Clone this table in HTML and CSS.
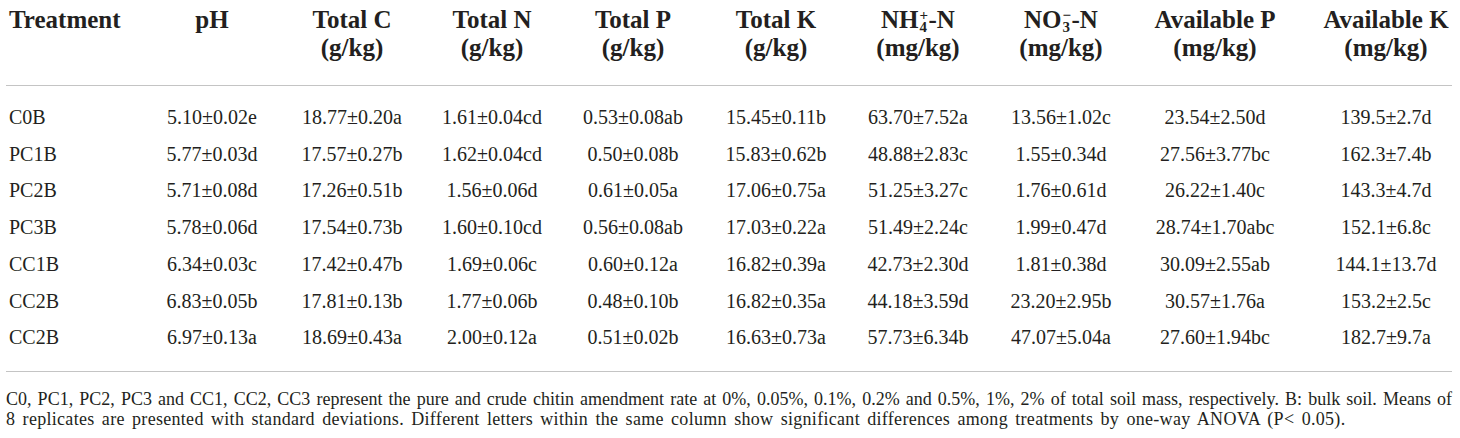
FILE: index.html
```html
<!DOCTYPE html>
<html lang="en">
<head>
    <meta charset="UTF-8">
    <title>Soil properties table</title>
    <link rel="stylesheet" href="styles.css">
</head>
<body>
    <div class="table-wrap">
        <table class="soil-table">
            <colgroup>
                <col class="col-treat">
                <col class="col-140">
                <col class="col-140">
                <col class="col-140">
                <col class="col-142">
                <col class="col-144">
                <col class="col-140">
                <col class="col-146">
                <col class="col-162">
                <col class="col-last">
            </colgroup>
            <thead>
                <tr>
                    <th class="treat">Treatment</th>
                    <th>pH</th>
                    <th>Total C<br>(g/kg)</th>
                    <th>Total N<br>(g/kg)</th>
                    <th>Total P<br>(g/kg)</th>
                    <th>Total K<br>(g/kg)</th>
                    <th>NH<span class="ion"><span class="ion-sup">+</span><span class="ion-sub">4</span></span>-N<br>(mg/kg)</th>
                    <th>NO<span class="ion"><span class="ion-sup">&minus;</span><span class="ion-sub">3</span></span>-N<br>(mg/kg)</th>
                    <th>Available P<br>(mg/kg)</th>
                    <th class="last">Available K<br>(mg/kg)</th>
                </tr>
            </thead>
            <tbody>
                <tr class="first">
                    <td class="treat">C0B</td>
                    <td>5.10&plusmn;0.02e</td><td>18.77&plusmn;0.20a</td><td>1.61&plusmn;0.04cd</td><td>0.53&plusmn;0.08ab</td>
                    <td>15.45&plusmn;0.11b</td><td>63.70&plusmn;7.52a</td><td>13.56&plusmn;1.02c</td><td>23.54&plusmn;2.50d</td><td class="last">139.5&plusmn;2.7d</td>
                </tr>
                <tr>
                    <td class="treat">PC1B</td>
                    <td>5.77&plusmn;0.03d</td><td>17.57&plusmn;0.27b</td><td>1.62&plusmn;0.04cd</td><td>0.50&plusmn;0.08b</td>
                    <td>15.83&plusmn;0.62b</td><td>48.88&plusmn;2.83c</td><td>1.55&plusmn;0.34d</td><td>27.56&plusmn;3.77bc</td><td class="last">162.3&plusmn;7.4b</td>
                </tr>
                <tr>
                    <td class="treat">PC2B</td>
                    <td>5.71&plusmn;0.08d</td><td>17.26&plusmn;0.51b</td><td>1.56&plusmn;0.06d</td><td>0.61&plusmn;0.05a</td>
                    <td>17.06&plusmn;0.75a</td><td>51.25&plusmn;3.27c</td><td>1.76&plusmn;0.61d</td><td>26.22&plusmn;1.40c</td><td class="last">143.3&plusmn;4.7d</td>
                </tr>
                <tr>
                    <td class="treat">PC3B</td>
                    <td>5.78&plusmn;0.06d</td><td>17.54&plusmn;0.73b</td><td>1.60&plusmn;0.10cd</td><td>0.56&plusmn;0.08ab</td>
                    <td>17.03&plusmn;0.22a</td><td>51.49&plusmn;2.24c</td><td>1.99&plusmn;0.47d</td><td>28.74&plusmn;1.70abc</td><td class="last">152.1&plusmn;6.8c</td>
                </tr>
                <tr>
                    <td class="treat">CC1B</td>
                    <td>6.34&plusmn;0.03c</td><td>17.42&plusmn;0.47b</td><td>1.69&plusmn;0.06c</td><td>0.60&plusmn;0.12a</td>
                    <td>16.82&plusmn;0.39a</td><td>42.73&plusmn;2.30d</td><td>1.81&plusmn;0.38d</td><td>30.09&plusmn;2.55ab</td><td class="last">144.1&plusmn;13.7d</td>
                </tr>
                <tr>
                    <td class="treat">CC2B</td>
                    <td>6.83&plusmn;0.05b</td><td>17.81&plusmn;0.13b</td><td>1.77&plusmn;0.06b</td><td>0.48&plusmn;0.10b</td>
                    <td>16.82&plusmn;0.35a</td><td>44.18&plusmn;3.59d</td><td>23.20&plusmn;2.95b</td><td>30.57&plusmn;1.76a</td><td class="last">153.2&plusmn;2.5c</td>
                </tr>
                <tr class="end">
                    <td class="treat">CC2B</td>
                    <td>6.97&plusmn;0.13a</td><td>18.69&plusmn;0.43a</td><td>2.00&plusmn;0.12a</td><td>0.51&plusmn;0.02b</td>
                    <td>16.63&plusmn;0.73a</td><td>57.73&plusmn;6.34b</td><td>47.07&plusmn;5.04a</td><td>27.60&plusmn;1.94bc</td><td class="last">182.7&plusmn;9.7a</td>
                </tr>
            </tbody>
        </table>
        <p class="table-note">
            <span class="note-line first-line">C0, PC1, PC2, PC3 and CC1, CC2, CC3 represent the pure and crude chitin amendment rate at 0%, 0.05%, 0.1%, 0.2% and 0.5%, 1%, 2% of total soil mass, respectively. B: bulk soil. Means of</span>
            <span class="note-line">8 replicates are presented with standard deviations. Different letters within the same column show significant differences among treatments by one-way ANOVA (P&lt; 0.05).</span>
        </p>
    </div>
</body>
</html>
```

FILE: styles.css
```css
* {
    box-sizing: border-box;
}
body {
    margin: 0;
    background: #fff;
    color: #231f20;
    font-family: "Liberation Serif", "Times New Roman", serif;
}
.table-wrap {
    width: 1446px;
    margin-left: 6px;
}
.soil-table {
    width: 1446px;
    table-layout: fixed;
    border-collapse: collapse;
}
.col-treat { width: 136px; }
.col-140 { width: 140px; }
.col-142 { width: 142px; }
.col-144 { width: 144px; }
.col-146 { width: 146px; }
.col-162 { width: 162px; }
.col-last { width: 156px; }

.soil-table th {
    font-size: 25px;
    font-weight: bold;
    line-height: 28px;
    text-align: center;
    vertical-align: top;
    padding: 6px 0 23px;
    border-bottom: 1.5px solid #c4c4c4;
    white-space: nowrap;
}
.soil-table td {
    font-size: 20px;
    line-height: 24px;
    height: 36.8px;
    padding: 0;
    text-align: center;
    vertical-align: middle;
    white-space: nowrap;
}
.soil-table .treat {
    text-align: left;
    padding-left: 3px;
}
.soil-table .last {
    padding-left: 24px;
}
.soil-table tr.first td {
    padding-top: 13px;
    height: 49.8px;
}
.soil-table tr.end td {
    padding-bottom: 15px;
    height: 51.8px;
    border-bottom: 1.5px solid #c4c4c4;
}
.soil-table tr.first td.last,
.soil-table tr.end td.last {
    padding-left: 24px;
}

/* stacked super/subscript on ion names */
.ion {
    position: relative;
    display: inline-block;
    width: 10px;
    height: 0;
}
.ion-sup,
.ion-sub {
    position: absolute;
    left: 1px;
    font-size: 15px;
    line-height: 1;
}
.ion-sup {
    top: -20px;
}
.ion-sub {
    top: -8px;
}

.table-note {
    margin: 17px 0 0;
    font-size: 18px;
    line-height: 20px;
}
.note-line {
    display: block;
}
.first-line {
    text-align: justify;
    text-align-last: justify;
}
.note-line + .note-line {
    letter-spacing: 0.3px;
    word-spacing: 2.5px;
}
```
